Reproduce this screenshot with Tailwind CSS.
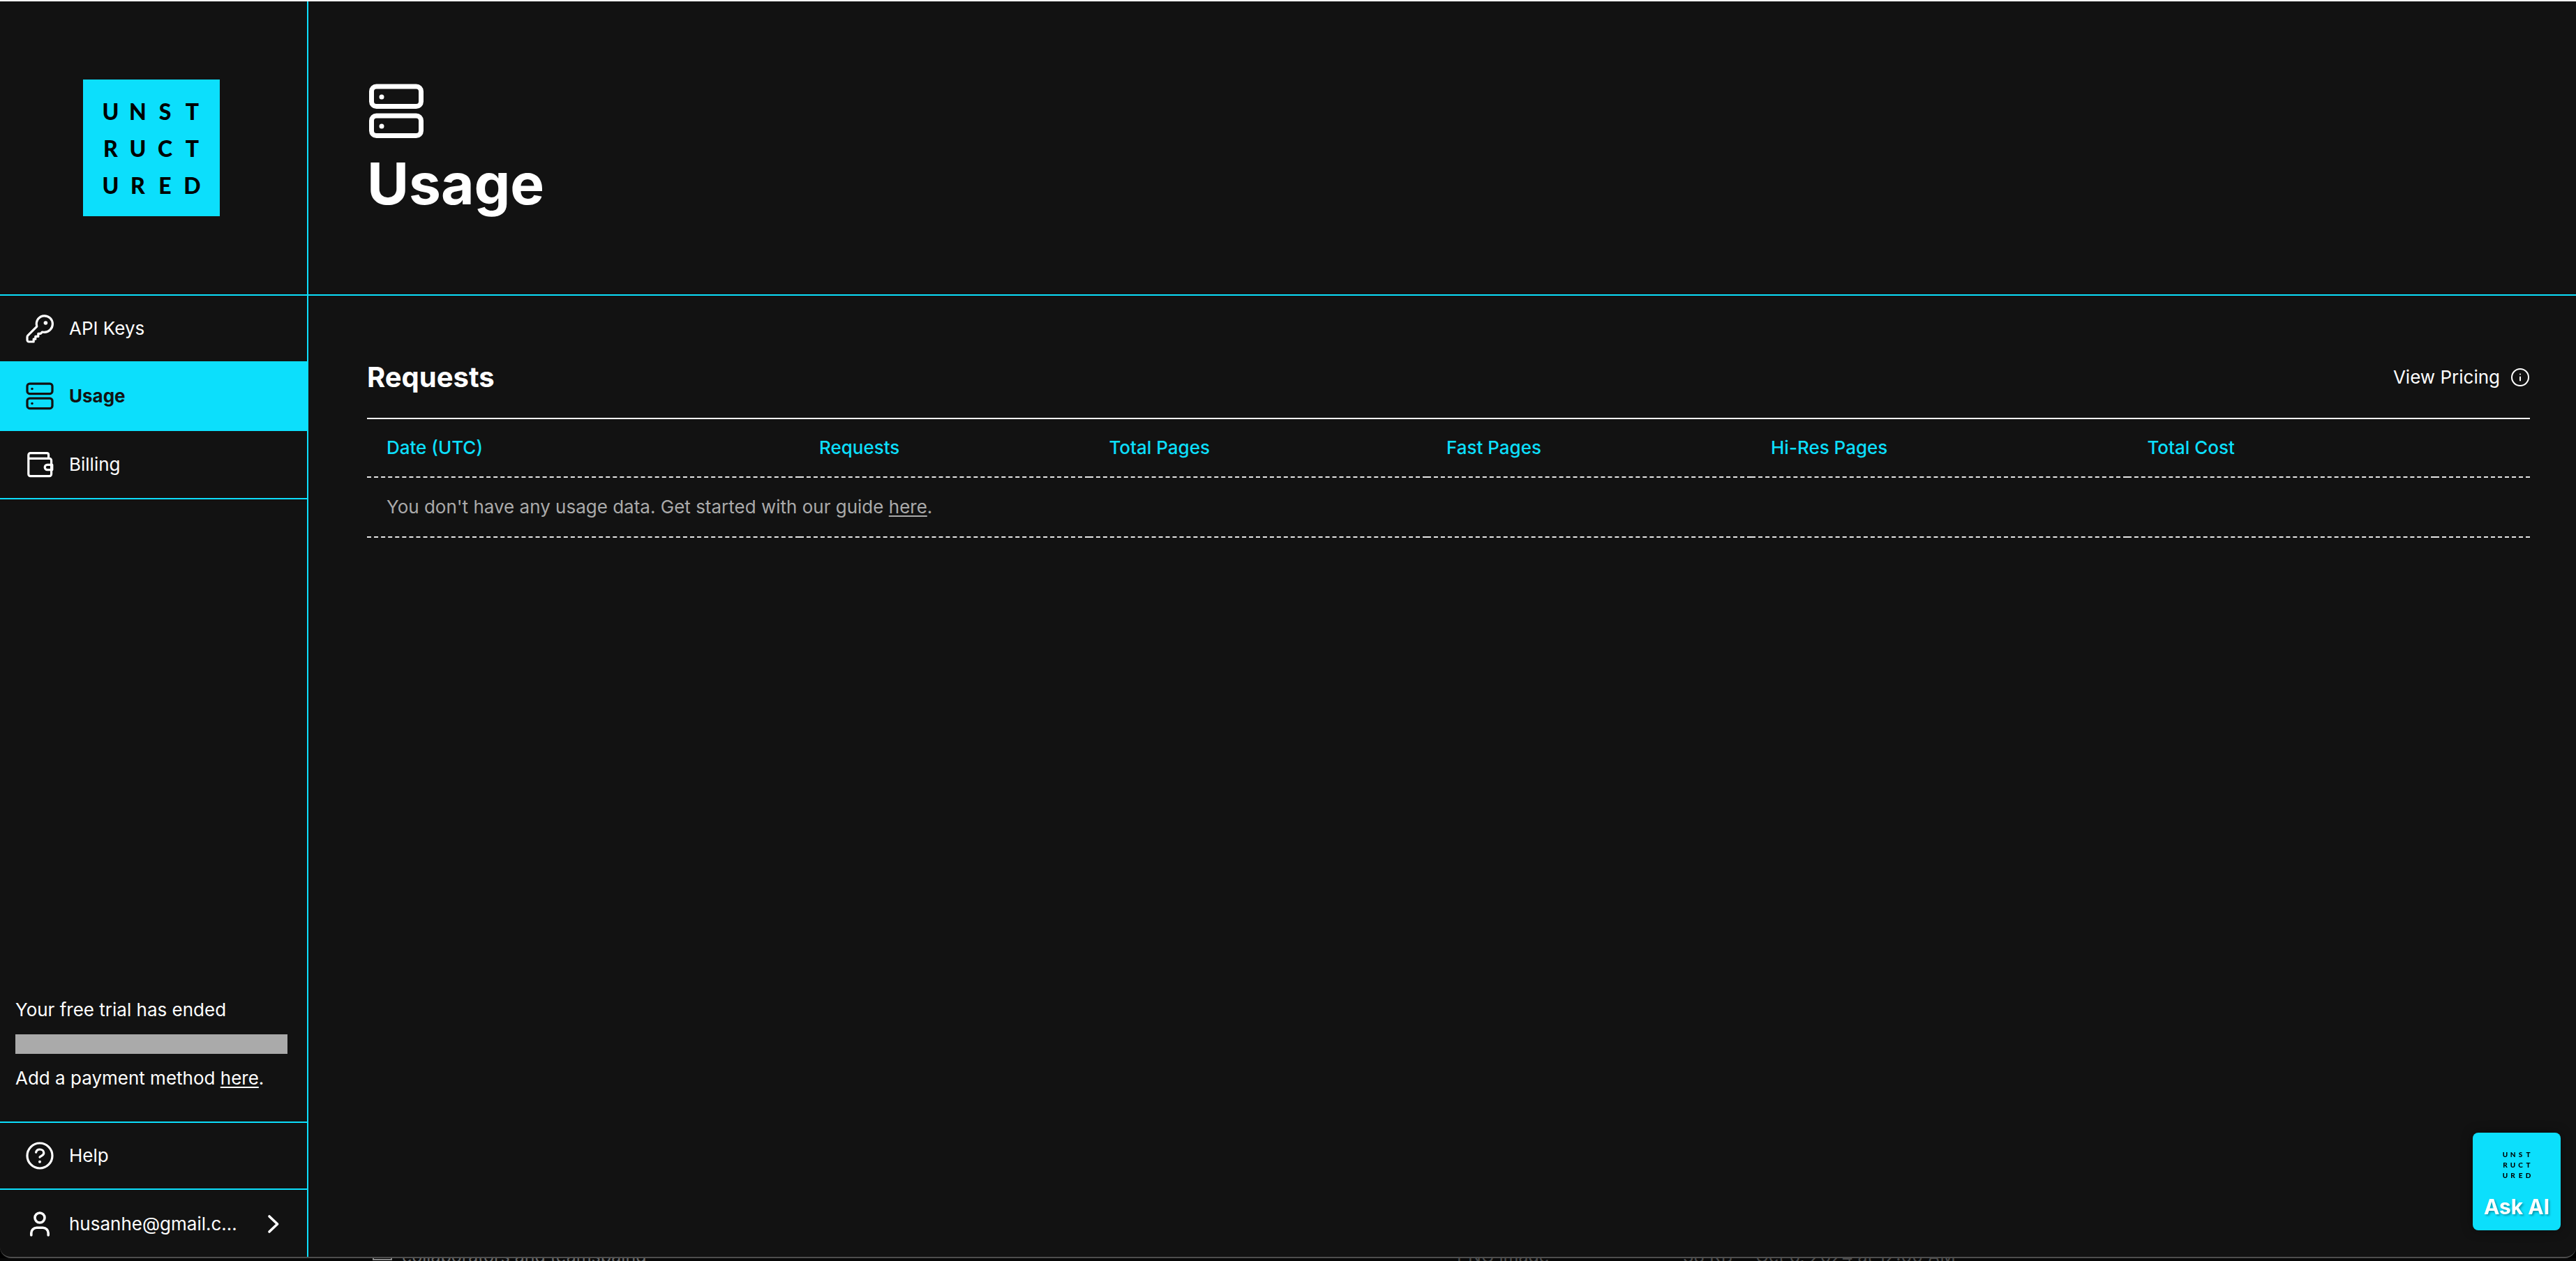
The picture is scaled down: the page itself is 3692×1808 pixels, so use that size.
<!DOCTYPE html>
<html lang="en">
<head>
    <meta charset="UTF-8">
    <meta name="viewport" content="width=device-width, initial-scale=1.0">
    <title>Usage</title>
    <script src="https://cdn.jsdelivr.net/npm/@tailwindcss/browser@4"></script>
</head>
<body class="h-screen flex flex-col overflow-hidden bg-black font-['Inter',sans-serif] text-[26px] leading-10 text-white">
    <div class="flex flex-1 min-h-0 bg-[#121212] border-t-2 border-t-white border-b-2 border-b-[#4d4d4d] rounded-b-2xl">

        <!-- Sidebar -->
        <aside class="flex flex-col shrink-0 w-[442px] border-r-2 border-[#0cdffc]">
            <div class="flex h-[422px] items-center pl-[119px] border-b-2 border-[#0cdffc]">
                <a href="#" aria-label="Unstructured" class="grid grid-cols-4 content-center justify-items-center size-49 px-5 bg-[#0cdffc] text-black text-[32px] leading-[53px] font-black font-['Lato',sans-serif]">
                    <span>U</span><span>N</span><span>S</span><span>T</span>
                    <span>R</span><span>U</span><span>C</span><span>T</span>
                    <span>U</span><span>R</span><span>E</span><span>D</span>
                </a>
            </div>
            <nav class="border-b-2 border-[#0cdffc]">
                <a href="#" class="flex items-center gap-[18px] h-[94px] px-[33px]">
                    <svg class="size-12" viewBox="0 0 24 24" fill="none" stroke="currentColor" stroke-width="1.6" stroke-linecap="round" stroke-linejoin="round">
                        <path d="M9.9 10.6C8.8 6.3 11.6 2.9 15.3 2.9c3.3 0 5.9 2.6 5.9 5.9s-2.7 5.9-5.9 5.9c-.5 0-1-.1-1.5-.2l-1.2 1.2h-1.7v2H8.9v1.9H7.6v1.9H4.3A1.2 1.2 0 0 1 3 20.3v-2.2c0-.4.1-.7.4-1z"/>
                        <circle cx="16.2" cy="8" r=".9" fill="currentColor" stroke-width="1"/>
                    </svg>
                    API Keys
                </a>
                <a href="#" class="flex items-center gap-[18px] h-[100px] px-[33px] bg-[#0cdffc] text-[#121212] font-bold">
                    <svg class="size-12" viewBox="0 0 96 96" fill="none" stroke="currentColor" stroke-width="6.5">
                        <rect x="12" y="12" width="72" height="29" rx="7"/>
                        <rect x="12" y="54" width="72" height="29" rx="7"/>
                        <circle cx="26" cy="27" r="3.5" fill="currentColor" stroke="none"/>
                        <circle cx="26" cy="69" r="3.5" fill="currentColor" stroke="none"/>
                    </svg>
                    Usage
                </a>
                <a href="#" class="flex items-center gap-[18px] h-24 px-[33px]">
                    <svg class="size-12" viewBox="0 0 24 24" fill="none" stroke="currentColor" stroke-width="1.6" stroke-linecap="round" stroke-linejoin="round">
                        <path d="M18.3 7.7V5a1.2 1.2 0 0 0-1.2-1.2H5.3A1.4 1.4 0 0 0 3.9 5.2v13.7a1.4 1.4 0 0 0 1.4 1.4h13.6a1.4 1.4 0 0 0 1.4-1.4V9.1a1.4 1.4 0 0 0-1.4-1.4H4.2"/>
                        <path d="M20.9 12.2h-3.5a1.8 1.8 0 0 0 0 3.6h3.5z"/>
                    </svg>
                    Billing
                </a>
            </nav>

            <div class="mt-auto pl-[22px] pr-7 pb-[42px]">
                <p id="trial">Your free trial has ended</p>
                <div role="progressbar" aria-labelledby="trial" aria-valuenow="0" class="h-7 my-[15px] bg-[#aaaaaa]"></div>
                <p>Add a payment method <a href="#" class="underline decoration-2 underline-offset-3">here</a>.</p>
            </div>
            <a href="#" class="flex items-center gap-[18px] h-[98px] px-[33px] border-y-2 border-[#0cdffc]">
                <svg class="size-12" viewBox="0 0 24 24" fill="none" stroke="currentColor" stroke-width="1.6" stroke-linecap="round" stroke-linejoin="round">
                    <circle cx="12" cy="12" r="9"/>
                    <path d="M9.3 9.6c.3-1.300 1.400-2.100 2.700-2.100 1.700 0 2.900 1.100 2.900 2.500 0 1.900-2 2-2.900 3"/>
                    <circle cx="12" cy="16.4" r=".5" fill="currentColor" stroke-width="1"/>
                </svg>
                Help
            </a>
            <button type="button" class="flex items-center gap-[18px] h-24 pl-[33px] pr-6 pt-0.5 text-left">
                <svg class="size-12 shrink-0" viewBox="0 0 24 24" fill="none" stroke="currentColor" stroke-width="1.8" stroke-linecap="round" stroke-linejoin="round">
                    <circle cx="12" cy="7.5" r="3.5"/>
                    <path d="M5.900 20v-1.500a3.900 3.900 0 0 1 3.900-3.900h4.400a3.900 3.900 0 0 1 3.900 3.900V20"/>
                </svg>
                <span class="flex-1">husanhe@gmail.c…</span>
                <svg class="size-12 shrink-0 -ml-4" viewBox="0 0 24 24" fill="none" stroke="currentColor" stroke-width="1.8" stroke-linecap="round" stroke-linejoin="round">
                    <path d="M9 6.5l5.8 5.5L9 17.500"/>
                </svg>
            </button>
        </aside>

        <!-- Main content -->
        <main class="flex-1 min-w-0">
            <header class="h-[422px] px-[84px] pt-[109px] border-b-2 border-[#0cdffc]">
                <svg class="size-24 -ml-1.5" viewBox="0 0 96 96" fill="none" stroke="currentColor" stroke-width="7">
                    <rect x="12.5" y="13" width="71" height="28.500" rx="7"/>
                    <rect x="12.5" y="55" width="71" height="28.500" rx="7"/>
                    <circle cx="27" cy="28" r="3.5" fill="currentColor" stroke="none"/>
                    <circle cx="27" cy="70" r="3.5" fill="currentColor" stroke="none"/>
                </svg>
                <h1 class="mt-1 text-[82px] leading-[106px] font-bold">Usage</h1>
            </header>

            <section class="pl-[84px] pr-[66px] pt-[94px]">
                <div class="flex items-center justify-between h-[83px] pb-9 border-b-2 border-white">
                    <h2 class="text-[40px] leading-12 font-bold">Requests</h2>
                    <a href="#" class="flex items-center gap-[15px]">
                        View Pricing
                        <svg class="size-7" viewBox="0 0 28 28" fill="none" stroke="currentColor" stroke-width="2" stroke-linecap="round">
                            <circle cx="14" cy="14" r="12"/>
                            <path d="M14 13.5v5"/>
                            <path d="M14 9.5v.1"/>
                        </svg>
                    </a>
                </div>
                <table class="w-full table-fixed border-separate border-spacing-0 text-left">
                    <colgroup>
                        <col class="w-[20%]">
                        <col class="w-[13.4%]">
                        <col class="w-[15.6%]">
                        <col class="w-[15%]">
                        <col class="w-[17.4%]">
                        <col class="w-[14.2%]">
                        <col>
                    </colgroup>
                    <thead class="text-[#0cdffc]">
                        <tr>
                            <th class="h-[84px] px-7 font-medium border-b-2 border-dashed border-[#e5e5e5]">Date (UTC)</th>
                            <th class="px-7 font-medium border-b-2 border-dashed border-[#e5e5e5]">Requests</th>
                            <th class="px-7 font-medium border-b-2 border-dashed border-[#e5e5e5]">Total Pages</th>
                            <th class="px-7 font-medium border-b-2 border-dashed border-[#e5e5e5]">Fast Pages</th>
                            <th class="px-7 font-medium border-b-2 border-dashed border-[#e5e5e5]">Hi-Res Pages</th>
                            <th class="px-7 font-medium border-b-2 border-dashed border-[#e5e5e5]">Total Cost</th>
                            <th class="border-b-2 border-dashed border-[#e5e5e5]"></th>
                        </tr>
                    </thead>
                    <tbody>
                        <tr class="text-[#aaaaaa]">
                            <td class="h-[86px] pl-7 whitespace-nowrap border-b-2 border-dashed border-[#e5e5e5]">You don't have any usage data. Get started with our guide <a href="#" class="underline decoration-2 underline-offset-3">here</a>.</td>
                            <td class="border-b-2 border-dashed border-[#e5e5e5]"></td>
                            <td class="border-b-2 border-dashed border-[#e5e5e5]"></td>
                            <td class="border-b-2 border-dashed border-[#e5e5e5]"></td>
                            <td class="border-b-2 border-dashed border-[#e5e5e5]"></td>
                            <td class="border-b-2 border-dashed border-[#e5e5e5]"></td>
                            <td class="border-b-2 border-dashed border-[#e5e5e5]"></td>
                        </tr>
                    </tbody>
                </table>
            </section>
        </main>
    </div>

    <!-- Chat widget -->
    <button type="button" class="fixed right-[22px] bottom-11 flex flex-col items-center w-[126px] h-[140px] pt-6 rounded-lg bg-[#0cdffc] shadow-[0_0_16px_rgba(0,0,0,0.4)]">
        <span class="grid grid-cols-4 justify-items-center w-11 text-black text-[10px] leading-[15px] font-black font-['Lato',sans-serif]">
            <span>U</span><span>N</span><span>S</span><span>T</span>
            <span>R</span><span>U</span><span>C</span><span>T</span>
            <span>U</span><span>R</span><span>E</span><span>D</span>
        </span>
        <span class="mt-[17px] text-[30px] leading-10 font-bold whitespace-nowrap text-shadow-[2px_2px_3px_rgba(0,0,0,0.3)]">Ask AI</span>
    </button>

    <!-- Window behind -->
    <div class="flex items-end shrink-0 h-1 overflow-hidden bg-[#080808] text-[#6b6b6b] text-[25px] leading-[14px]">
        <span class="h-[3px] w-7 ml-[534px] mr-[14px] mb-px border-2 border-t-0 border-[#8a8a8a]"></span>
        <span class="w-[1512px]">collaborators and teamspaing</span>
        <span class="w-[324px] text-[#4b4b4b]">PNG image</span>
        <span class="w-[104px] text-[#4b4b4b]">38 KB</span>
        <span class="text-[#4b4b4b]">Oct 6, 2024 at 12:00 AM</span>
    </div>
</body>
</html>
